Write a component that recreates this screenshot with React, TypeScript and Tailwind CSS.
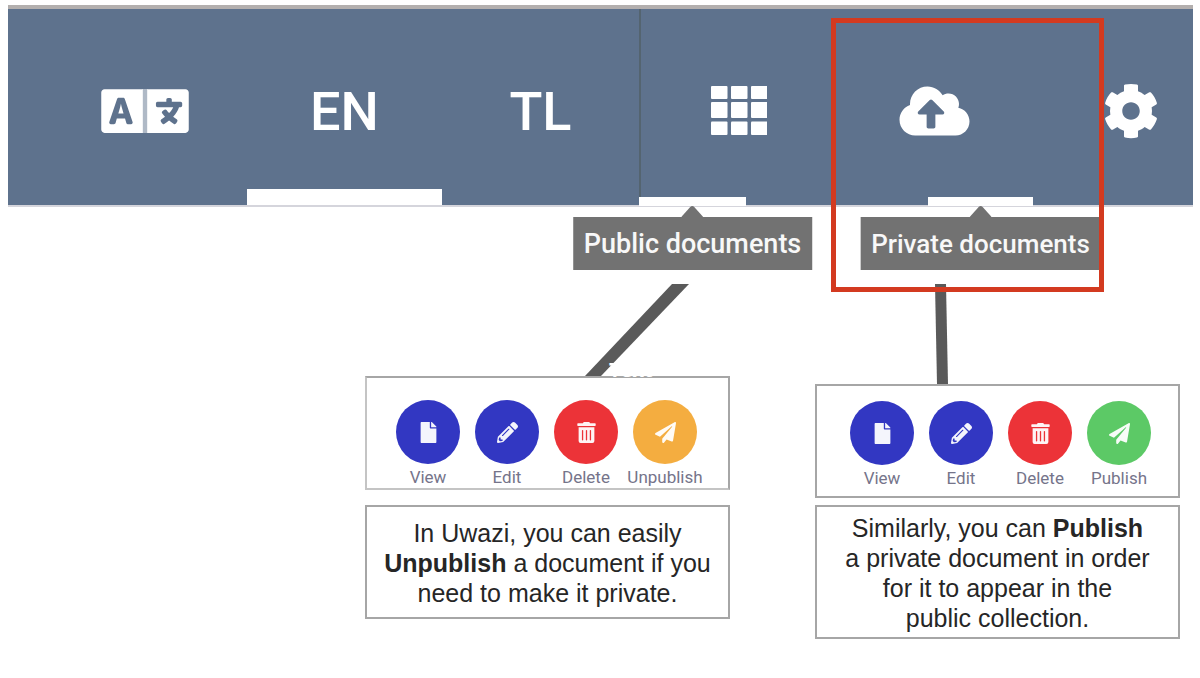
import type { ReactNode } from "react";
import {
  FaCloudUploadAlt,
  FaCog,
  FaFile,
  FaLanguage,
  FaPaperPlane,
  FaPencilAlt,
  FaTrashAlt,
} from "react-icons/fa";

function Tooltip({ size, children }: { size: string; children: ReactNode }) {
  return (
    <span
      role="tooltip"
      className="absolute top-[9px] left-1/2 flex -translate-x-1/2 flex-col items-center"
    >
      <svg width="22" height="11" viewBox="0 0 22 11" className="block fill-[#727272]">
        <path d="M0 11 L9 1 Q11 -1 13 1 L22 11 Z" />
      </svg>
      <span
        className={`bg-[#727272] px-[11px] pt-[9px] pb-2 leading-9 font-medium whitespace-nowrap text-[#f8f8f8] ${size}`}
      >
        {children}
      </span>
    </span>
  );
}

function GridIcon() {
  return (
    <svg width="56" height="50" viewBox="0 0 56 50" className="fill-white">
      {[0, 20, 40].map((x) => (
        <g key={x}>
          <rect x={x} y="0" width="16.5" height="13" rx="1" />
          <rect x={x} y="16" width="16.5" height="16" rx="1" />
          <rect x={x} y="35.5" width="16.5" height="13.5" rx="1" />
        </g>
      ))}
    </svg>
  );
}

function ActionButton({ label, color, children }: { label: string; color: string; children: ReactNode }) {
  return (
    <button type="button" className="flex flex-col items-center gap-[3px] text-[17px] leading-5 text-[#75748a]">
      <span className={`flex size-16 items-center justify-center rounded-full text-[21px] text-white/95 ${color}`}>
        {children}
      </span>
      {label}
    </button>
  );
}

function Actions({ last, lastColor }: { last: string; lastColor: string }) {
  return (
    <div className="grid grid-cols-[repeat(4,79px)] justify-center">
      <ActionButton label="View" color="bg-[#3237c2]">
        <FaFile />
      </ActionButton>
      <ActionButton label="Edit" color="bg-[#3237c2]">
        <FaPencilAlt />
      </ActionButton>
      <ActionButton label="Delete" color="bg-[#ec3338]">
        <FaTrashAlt />
      </ActionButton>
      <ActionButton label={last} color={lastColor}>
        <FaPaperPlane />
      </ActionButton>
    </div>
  );
}

const tab = "relative flex items-center justify-center";

export default function App() {
  return (
    <div className="min-h-screen bg-white pt-[5px] font-['Roboto',sans-serif]">
      <header className="mr-[7px] ml-2 border-t-4 border-b-2 border-t-[#b3afae] border-b-[#d5d5dc] bg-[#5e728d] text-white">
        <nav className="grid h-[196px] grid-cols-[239fr_195fr_197fr_197fr_197fr_160fr] text-[54px] font-medium">
          <button type="button" aria-label="Languages" className={`${tab} pt-2 pl-[34px]`}>
            <span className="relative">
              <FaLanguage className="h-[70px] w-[88px]" />
              <span className="absolute inset-y-[13px] left-[41px] w-[6px] bg-white/50" />
            </span>
          </button>
          <button type="button" className={`${tab} pt-2`}>
            EN
            <span className="absolute inset-x-0 bottom-0 h-4 bg-white" />
          </button>
          <button type="button" className={`${tab} pt-2`}>
            TL
          </button>
          <button type="button" aria-label="Public" className={`${tab} border-l-2 border-[#546470] pt-2`}>
            <GridIcon />
            <span className="absolute bottom-[-1px] -left-0.5 h-[9px] w-[107px] bg-white">
              <Tooltip size="text-[27px]">Public documents</Tooltip>
            </span>
          </button>
          <div className="relative flex">
            <button type="button" aria-label="Private" className="flex flex-1 items-center justify-center pt-2">
              <FaCloudUploadAlt className="h-14 w-[71px]" />
              <span className="absolute right-0 bottom-[-1px] h-[9px] w-[105px] bg-white">
                <Tooltip size="text-[26px]">Private documents</Tooltip>
              </span>
            </button>
            <div className="pointer-events-none absolute top-[9px] -left-[5px] z-10 h-[274px] w-[273px] border-5 border-[#d33a20]" />
          </div>
          <button type="button" aria-label="Settings" className="flex items-center pt-2 pl-[70px]">
            <FaCog className="size-14" />
          </button>
        </nav>
      </header>

      <main className="mt-[77px] flex items-start justify-end gap-[85px] pr-5 pb-8">
        <section className="flex w-[365px] flex-col">
          <div className="relative">
            <svg width="365" height="92" viewBox="0 0 365 92" className="block fill-[#5a5a5a]">
              <polygon points="307,0 324,0 236,92 220,92" />
            </svg>
            <span className="absolute top-[72px] left-[244px] z-10 font-['Open_Sans',sans-serif] text-[20px] leading-7 font-bold text-white">
              Text
            </span>
          </div>
          <div className="h-[114px] border-2 border-[#a6a6a6] border-b-[#c4c4c4] border-l-[#c4c4c4] bg-white pt-[22px] pr-0.5">
            <Actions last="Unpublish" lastColor="bg-[#f4ad40]" />
          </div>
          <p className="mt-[15px] border-2 border-[#a6a6a6] pt-[11px] pb-[9px] text-center font-['Liberation_Sans',sans-serif] text-[25px] leading-[30px] text-[#262626]">
            In Uwazi, you can easily
            <br />
            <b>Unpublish</b> a document if you
            <br />
            need to make it private.
          </p>
        </section>

        <section className="flex w-[365px] flex-col">
          <svg width="365" height="100" viewBox="0 0 365 100" className="block fill-[#5a5a5a]">
            <polygon points="120,0 131,0 133,100 122,100" />
          </svg>
          <div className="h-[114px] border-2 border-[#a6a6a6] bg-white pt-[15px] pl-1.5">
            <Actions last="Publish" lastColor="bg-[#5cc966]" />
          </div>
          <p className="mt-[7px] border-2 border-[#a6a6a6] pt-[6px] pb-1 text-center font-['Liberation_Sans',sans-serif] text-[25px] leading-[30px] text-[#262626]">
            Similarly, you can <b>Publish</b>
            <br />
            a private document in order
            <br />
            for it to appear in the
            <br />
            public collection.
          </p>
        </section>
      </main>
    </div>
  );
}
